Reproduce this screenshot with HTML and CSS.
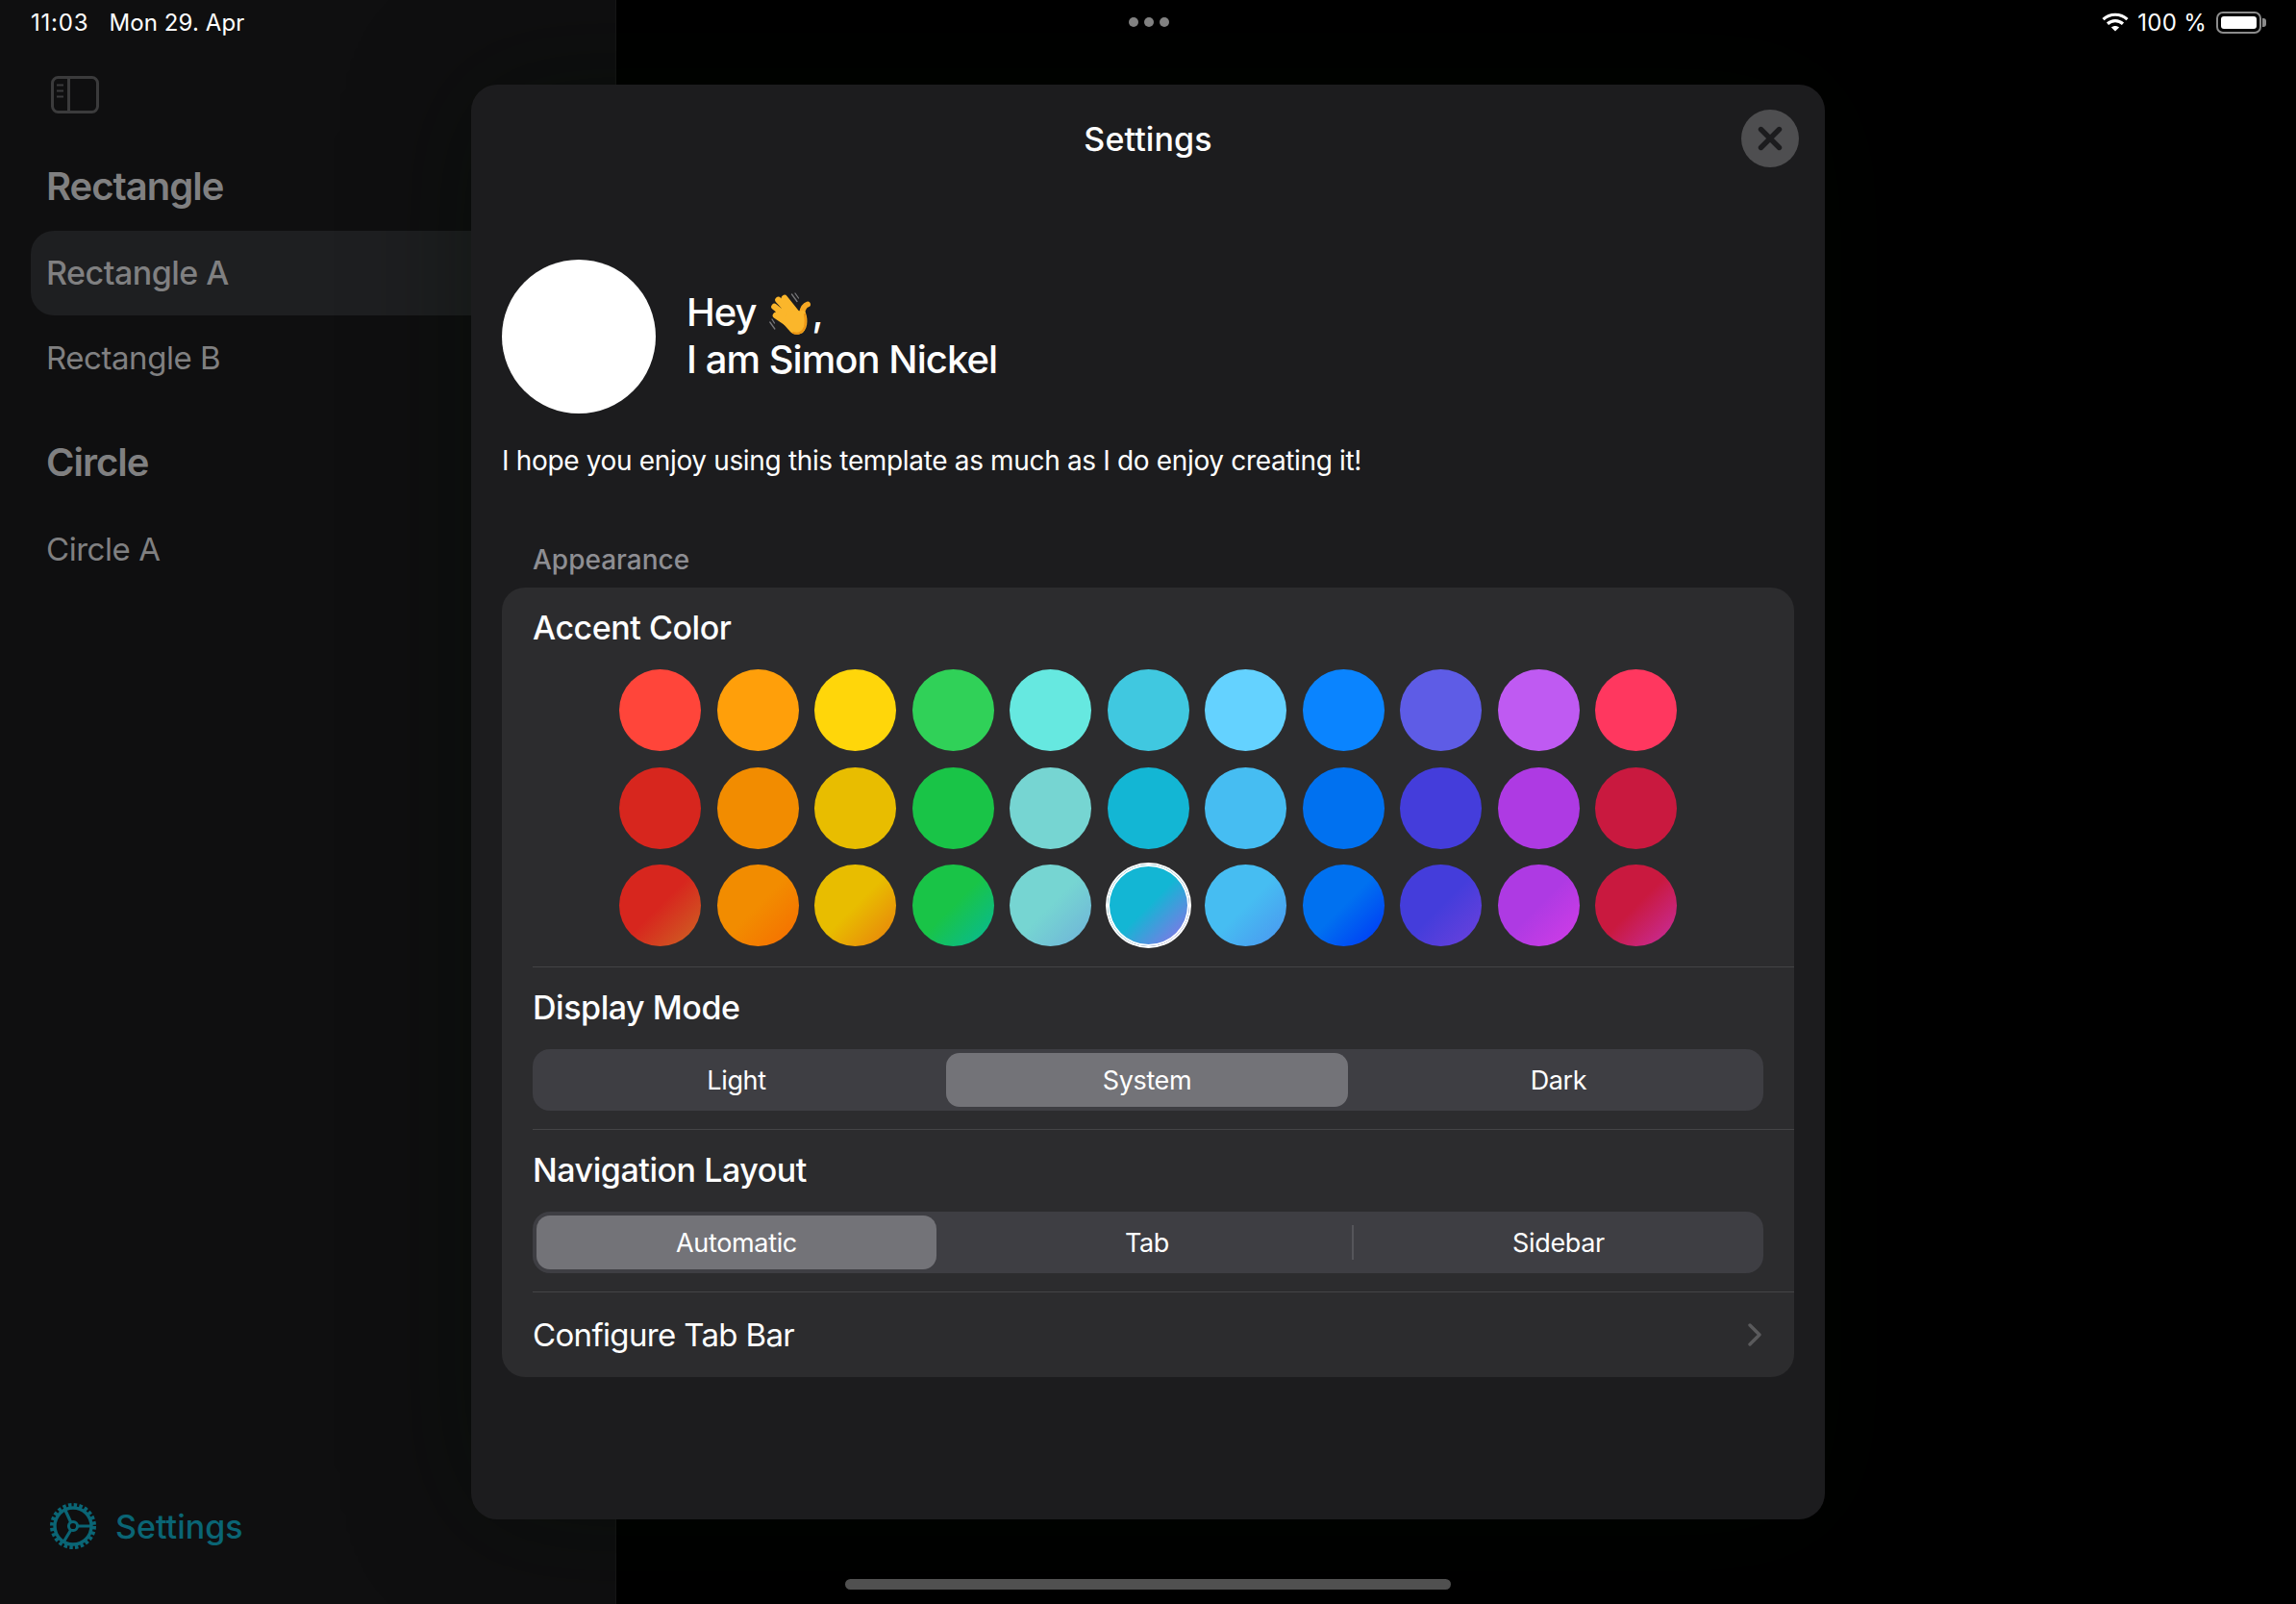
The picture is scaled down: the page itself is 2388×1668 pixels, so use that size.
FILE: index.html
```html
<!DOCTYPE html>
<html lang="en">
<head>
<meta charset="utf-8">
<title>Settings</title>
<link rel="stylesheet" href="styles.css">
</head>
<body>
<div class="screen">
  <aside class="sidebar">
    <svg class="toggle" width="50" height="39" viewBox="0 0 50 39" fill="none" stroke="#3b3b3c" stroke-width="3">
      <rect x="1.5" y="1.5" width="47" height="36" rx="6"/>
      <path d="M18.5 1.5v36"/>
      <path d="M6 9.5h7M6 15.5h7M6 21.5h7" stroke-width="2"/>
    </svg>
    <div class="side-head">Rectangle</div>
    <div class="side-row active">Rectangle A</div>
    <div class="side-row">Rectangle B</div>
    <div class="side-head second">Circle</div>
    <div class="side-row">Circle A</div>
    <div class="side-foot">
      <svg width="48" height="48" viewBox="0 0 48 48" fill="none" stroke="#0a6575">
        <circle cx="24" cy="24" r="21.5" stroke-width="5" stroke-dasharray="3.4 2.23"/>
        <circle cx="24" cy="24" r="19" stroke-width="3.4"/>
        <circle cx="24" cy="24" r="4.6" stroke-width="3"/>
        <path d="M28.6 24H43M21.7 20 15 5.5M21.7 28 13.5 41.5" stroke-width="3.2"/>
      </svg>
      <span>Settings</span>
    </div>
  </aside>

  <div class="status">
    <div class="status-left"><span class="time">11:03</span><span class="date">Mon 29. Apr</span></div>
    <div class="status-dots"><i></i><i></i><i></i></div>
    <div class="status-right">
      <svg width="28" height="20" viewBox="0 0 28 20" fill="none" stroke="#fff" stroke-width="3.2">
        <path d="M1.5 7.2C8.5 .6 19.5 .6 26.5 7.2"/>
        <path d="M6 11.8c4.6-4.2 11.4-4.2 16 0"/>
        <path d="M14 19.6 9.9 15.5c2.4-2 5.8-2 8.2 0z" fill="#fff" stroke="none"/>
      </svg>
      <span class="percent">100 %</span>
      <div class="battery"><div class="battery-fill"></div></div>
    </div>
  </div>

  <main class="sheet">
    <header class="sheet-head">
      <span></span>
      <h1>Settings</h1>
      <div class="close">
        <svg width="26" height="26" viewBox="0 0 26 26" fill="none" stroke="#1c1c1e" stroke-width="5.4" stroke-linecap="round">
          <path d="M3.5 3.5l19 19M22.5 3.5l-19 19"/>
        </svg>
      </div>
    </header>
    <section class="sheet-body">
      <div class="intro">
        <div class="avatar"></div>
        <div class="hello">
          <div>Hey <svg class="wave" width="44" height="44" viewBox="0 0 44 44" fill="none" stroke-linecap="round">
              <path d="M23.5 2l5.5 7.5M27 1l3.500 5M0.800 31l5 7M3 28l2.500 4" stroke="#77777a" stroke-width="1.300"/>
              <path d="M16 6 28 21M9.500 8 25 25M5.500 15 23 29M7 24 22 34" stroke="#fbb62b" stroke-width="6.600"/>
              <path d="M40 12.500c-3 1-5 4-6 9" stroke="#f7a823" stroke-width="6"/>
              <path d="M19 20 37 19c4 9 3 18-2 23-5 3-10 2-13-1L14 32z" fill="#fbb62b"/>
              <path d="M25 42c5 2 10 0 12-6 1-4 1-8 0-13" stroke="#ea9414" stroke-width="2"/>
            </svg>,</div>
          <div>I am Simon Nickel</div>
        </div>
      </div>
      <p class="lead">I hope you enjoy using this template as much as I do enjoy creating it!</p>
      <h2 class="group-title">Appearance</h2>
      <div class="group">
        <div class="block">
          <h3>Accent Color</h3>
          <div class="swatches">
            <span class="dot" style="background:#ff453a"></span>
            <span class="dot" style="background:#ff9f0a"></span>
            <span class="dot" style="background:#ffd60a"></span>
            <span class="dot" style="background:#30d158"></span>
            <span class="dot" style="background:#66e8e0"></span>
            <span class="dot" style="background:#40c8e0"></span>
            <span class="dot" style="background:#64d2ff"></span>
            <span class="dot" style="background:#0a84ff"></span>
            <span class="dot" style="background:#5e5ce6"></span>
            <span class="dot" style="background:#bf5af2"></span>
            <span class="dot" style="background:#ff375f"></span>

            <span class="dot" style="background:#d7261e"></span>
            <span class="dot" style="background:#f28c00"></span>
            <span class="dot" style="background:#e8bd00"></span>
            <span class="dot" style="background:#19c447"></span>
            <span class="dot" style="background:#76d5d2"></span>
            <span class="dot" style="background:#13b6d4"></span>
            <span class="dot" style="background:#46bdf2"></span>
            <span class="dot" style="background:#0071f0"></span>
            <span class="dot" style="background:#443ddb"></span>
            <span class="dot" style="background:#ae3ae3"></span>
            <span class="dot" style="background:#c9193f"></span>

            <span class="dot" style="background:linear-gradient(135deg,#d7261e 50%,#d05a22 90%)"></span>
            <span class="dot" style="background:linear-gradient(135deg,#f28c00 50%,#f57200 90%)"></span>
            <span class="dot" style="background:linear-gradient(135deg,#e8bd00 50%,#e88a0a 90%)"></span>
            <span class="dot" style="background:linear-gradient(135deg,#19c447 50%,#0abb8a 90%)"></span>
            <span class="dot" style="background:linear-gradient(135deg,#76d5d2 50%,#70b8d8 90%)"></span>
            <span class="dot selected" style="background:linear-gradient(135deg,#13b6d4 50%,#8077e6 90%)"></span>
            <span class="dot" style="background:linear-gradient(135deg,#46bdf2 50%,#4a9cf0 90%)"></span>
            <span class="dot" style="background:linear-gradient(135deg,#0071f0 50%,#0040f5 90%)"></span>
            <span class="dot" style="background:linear-gradient(135deg,#443ddb 50%,#6540dc 90%)"></span>
            <span class="dot" style="background:linear-gradient(135deg,#ae3ae3 50%,#cc3ce6 90%)"></span>
            <span class="dot" style="background:linear-gradient(135deg,#c9193f 50%,#c82a90 90%)"></span>
          </div>
        </div>
        <div class="block seg-block">
          <h3>Display Mode</h3>
          <div class="seg">
            <div class="seg-item">Light</div>
            <div class="seg-item on">System</div>
            <div class="seg-item">Dark</div>
          </div>
        </div>
        <div class="block seg-block">
          <h3>Navigation Layout</h3>
          <div class="seg">
            <div class="seg-item on">Automatic</div>
            <div class="seg-item sep">Tab</div>
            <div class="seg-item">Sidebar</div>
          </div>
        </div>
        <div class="link-row">
          <span>Configure Tab Bar</span>
          <svg width="14" height="24" viewBox="0 0 14 24" fill="none" stroke="#5a5a5c" stroke-width="3.400" stroke-linecap="round" stroke-linejoin="round">
            <path d="M2 2l10 10L2 22"/>
          </svg>
        </div>
      </div>
    </section>
  </main>

  <div class="home-bar"></div>
</div>
</body>
</html>
```

FILE: styles.css
```css
* { box-sizing: border-box; }
html, body { margin: 0; padding: 0; background: #000; }
body { font-family: Inter, "Liberation Sans", sans-serif; color: #fff; }

.screen { position: relative; width: 2388px; height: 1668px; overflow: hidden; background: #000; }

.sidebar {
  width: 641px; height: 100%;
  display: flex; flex-direction: column; align-items: stretch;
  padding: 79px 32px 56px 32px;
  background: #0f0f10;
  border-right: 1px solid #171717;
  color: #808081;
}
.toggle { display: block; margin-left: 21px; margin-bottom: 51px; flex: none; }
.side-head { height: 50px; line-height: 50px; padding-left: 16px; font-size: 40px; font-weight: 600; letter-spacing: -1px; margin-bottom: 21px; }
.side-head.second { margin-top: 40px; }
.side-row { height: 88px; line-height: 88px; padding-left: 16px; font-size: 33px; letter-spacing: -0.45px; border-radius: 24px; }
.side-row.active { background: #1e1f21; font-size: 34px; font-weight: 500; letter-spacing: -0.5px; }
.side-foot { margin-top: auto; height: 50px; display: flex; align-items: center; gap: 20px; padding-left: 20px; color: #0a6575; font-size: 34px; font-weight: 500; letter-spacing: 0; }

.status { position: absolute; top: 0; left: 0; width: 100%; height: 46px; display: grid; grid-template-columns: 1fr auto 1fr; align-items: center; padding: 0 30px 0 32px; font-size: 24px; }
.status-left { display: flex; gap: 21px; }
.time { letter-spacing: 0.8px; }
.date { letter-spacing: 0.1px; }
.percent { letter-spacing: 0.3px; }
.status-dots { display: flex; gap: 6px; }
.status-dots i { display: block; width: 10px; height: 10px; border-radius: 50%; background: #8b8b8b; }
.status-right { display: flex; align-items: center; justify-content: flex-end; gap: 9px; }
.battery { position: relative; width: 47px; height: 23px; margin-left: 1px; margin-right: 6px; padding: 3px; border: 2px solid #8c8c8c; border-radius: 7px; }
.battery::after { content: ""; position: absolute; right: -7px; top: 5px; width: 4px; height: 9px; background: #8c8c8c; border-radius: 0 3px 3px 0; }
.battery-fill { width: 100%; height: 100%; background: #fff; border-radius: 3px; }

.sheet { position: absolute; left: 490px; top: 88px; width: 1408px; height: 1492px; background: #1c1c1e; border-radius: 27px; box-shadow: 0 0 130px rgba(2, 12, 2, .45); }
.sheet-head { height: 112px; display: grid; grid-template-columns: 1fr auto 1fr; align-items: center; padding: 0 27px; }
.sheet-head h1 { margin: 0; font-size: 34px; font-weight: 500; letter-spacing: 0.1px; }
.close { justify-self: end; width: 60px; height: 60px; border-radius: 50%; background: #4e4e50; display: flex; align-items: center; justify-content: center; }

.sheet-body { padding: 70px 32px 0; }
.intro { display: flex; align-items: center; gap: 32px; }
.avatar { width: 160px; height: 160px; border-radius: 50%; background: #fff; flex: none; }
.hello { font-size: 40px; font-weight: 500; line-height: 48.5px; letter-spacing: -0.95px; margin-top: -1px; }
.wave { vertical-align: -9px; margin-left: 4px; margin-right: 0; }
.lead { margin: 29px 0 0; font-size: 28px; line-height: 40px; letter-spacing: -0.34px; }
.group-title { margin: 65px 0 0; padding-left: 32px; font-size: 28px; line-height: 36px; font-weight: 500; color: #8e8e93; }

.group { margin-top: 11px; background: #2c2c2e; border-radius: 24px; height: 821px; }
.block { margin-left: 32px; padding: 21px 0; border-bottom: 1px solid #444446; }
.block h3 { margin: 0 0 22px; font-size: 34px; line-height: 42px; font-weight: 500; letter-spacing: -0.45px; }
.seg-block { padding-bottom: 19px; padding-right: 32px; }
.swatches { display: grid; grid-template-columns: repeat(11, 85px); gap: 16.5px; justify-content: center; padding-right: 32px; }
.dot { display: block; width: 85px; height: 85px; border-radius: 50%; }
.dot.selected { box-shadow: 0 0 0 2px #fff, inset 0 0 0 2px #fff; }

.seg { display: grid; grid-template-columns: 416px 418px 418px; gap: 10px; height: 64px; padding: 4px; background: #3e3e43; border-radius: 18px; }
.seg-item { position: relative; display: flex; align-items: center; justify-content: center; font-size: 27px; letter-spacing: -0.35px; border-radius: 14px; }
.seg-item.on { background: #737378; }
.seg-item.sep::after { content: ""; position: absolute; right: -6px; top: 10px; bottom: 10px; width: 2px; background: #55555a; }

.link-row { height: 88px; margin: 0 34px 0 32px; display: flex; align-items: center; justify-content: space-between; font-size: 33px; letter-spacing: -0.65px; }

.home-bar { position: absolute; left: 879px; bottom: 15px; width: 630px; height: 11px; border-radius: 6px; background: #505050; }
```
